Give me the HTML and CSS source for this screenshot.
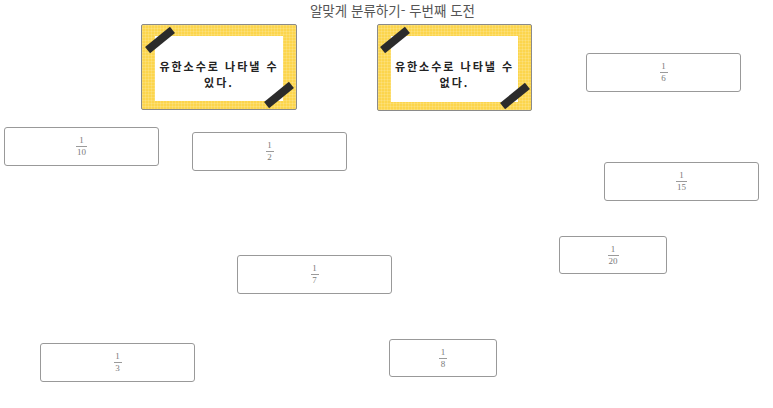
FILE: index.html
```html
<!DOCTYPE html>
<html lang="ko">
<head>
<meta charset="utf-8">
<link rel="stylesheet" href="styles.css">
</head>
<body>
<div class="canvas">
  <h1 class="title">알맞게 분류하기- 두번째 도전</h1>

  <div class="cat cat1">
    <div class="note"><p class="label"><span class="line">유한소수로 나타낼 수</span><span class="line">있다.</span></p></div>
    <div class="tape tape-tl"></div>
    <div class="tape tape-br"></div>
  </div>
  <div class="cat cat2">
    <div class="note"><p class="label"><span class="line">유한소수로 나타낼 수</span><span class="line">없다.</span></p></div>
    <div class="tape tape-tl"></div>
    <div class="tape tape-br"></div>
  </div>

  <div class="card c10"><span class="frac"><span class="num">1</span><span class="den">10</span></span></div>
  <div class="card c2"><span class="frac"><span class="num">1</span><span class="den">2</span></span></div>
  <div class="card c6"><span class="frac"><span class="num">1</span><span class="den">6</span></span></div>
  <div class="card c15"><span class="frac"><span class="num">1</span><span class="den">15</span></span></div>
  <div class="card c20 narrow"><span class="frac"><span class="num">1</span><span class="den">20</span></span></div>
  <div class="card c7"><span class="frac"><span class="num">1</span><span class="den">7</span></span></div>
  <div class="card c3"><span class="frac"><span class="num">1</span><span class="den">3</span></span></div>
  <div class="card c8 narrow"><span class="frac"><span class="num">1</span><span class="den">8</span></span></div>
</div>
</body>
</html>
```

FILE: styles.css
```css
html, body {
  margin: 0;
  padding: 0;
  background: #ffffff;
}
.canvas {
  position: relative;
  width: 773px;
  height: 408px;
  overflow: hidden;
  font-family: "Noto Sans CJK KR", "Noto Sans", sans-serif;
}
.title {
  margin: 0;
  padding-top: 1px;
  padding-left: 12px;
  text-align: center;
  font-size: 13.5px;
  font-weight: 400;
  line-height: 18px;
  color: #555555;
}
.cat {
  position: absolute;
  top: 24px;
  width: 156px;
  height: 86px;
  box-sizing: border-box;
  border: 1px solid #8a8a8a;
  border-radius: 2px;
  background-color: #fcd54c;
  background-image:
    linear-gradient(rgba(255,255,255,0.14) 1px, transparent 1px),
    linear-gradient(90deg, rgba(255,255,255,0.14) 1px, transparent 1px);
  background-size: 3px 3px;
  padding: 11px 13px 8px 13px;
  display: flex;
}
.cat1 { left: 141px; }
.cat2 { left: 377px; width: 155px; height: 87px; }
.note {
  flex: 1;
  background: #ffffff;
  display: flex;
  align-items: center;
  justify-content: center;
  text-align: center;
}
.label {
  margin: 0;
  padding-top: 10px;
  display: flex;
  flex-direction: column;
  align-items: center;
  font-family: "Noto Sans CJK KR", sans-serif;
  font-weight: 700;
  font-size: 11px;
  line-height: 16px;
  color: #222222;
  letter-spacing: 2px;
  white-space: nowrap;
}
.line {
  display: block;
}
.tape {
  position: absolute;
  width: 32px;
  height: 8px;
  background: #2b2b2b;
  transform: rotate(-39deg);
}
.tape-tl { left: 2px; top: 11px; }
.tape-br { left: 121px; top: 66px; }
.cat2 .tape-tl { left: 1px; top: 11px; }
.cat2 .tape-br { left: 121px; top: 67px; }

.card {
  position: absolute;
  width: 155px;
  height: 39px;
  box-sizing: border-box;
  border: 1px solid #999999;
  border-radius: 3px;
  background: #ffffff;
  display: flex;
  align-items: center;
  justify-content: center;
}
.card.narrow { width: 108px; height: 38px; }
.c10 { left: 4px; top: 127px; }
.c2 { left: 192px; top: 132px; }
.c6 { left: 586px; top: 53px; }
.c15 { left: 604px; top: 162px; }
.c20 { left: 559px; top: 236px; }
.c7 { left: 237px; top: 255px; }
.c3 { left: 40px; top: 343px; }
.c8 { left: 389px; top: 339px; }

.frac {
  display: inline-flex;
  flex-direction: column;
  align-items: center;
  font-family: "Liberation Serif", "DejaVu Serif", serif;
  font-size: 9px;
  line-height: 9px;
  color: #7a7a7a;
}
.num {
  padding: 0 1px 1px;
}
.den {
  border-top: 1px solid #9a9a9a;
  padding: 1px 1px 0;
  min-width: 6px;
  text-align: center;
}
```
